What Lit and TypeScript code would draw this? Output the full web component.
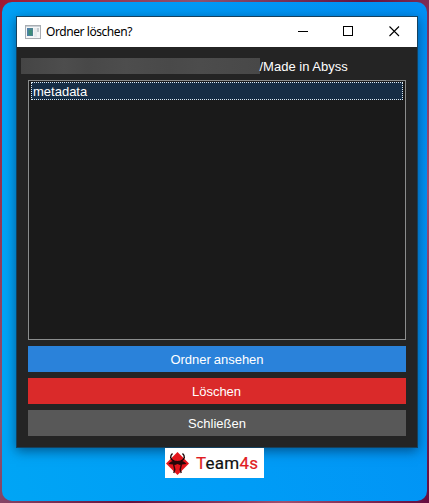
import { LitElement, html, css, svg } from "lit";
import { customElement, property } from "lit/decorators.js";

@customElement("title-bar")
export class TitleBar extends LitElement {
  static styles = css`
    :host {
      display: flex;
      align-items: center;
      height: 30px;
      background: #fff;
      color: #000;
      box-sizing: border-box;
      padding-left: 8px;
      font: 12px "Noto Sans", "Open Sans", sans-serif;
    }
    .title { flex: 1; margin-left: 5px; white-space: nowrap; letter-spacing: -0.43px; line-height: 30px; }
    .controls { display: flex; }
    .control { width: 46px; height: 30px; display: block; }
    .last { width: 45px; }
    svg { display: block; }
  `;
  render() {
    return html`
      <svg width="16" height="14" viewBox="0 0 16 14">
        <rect x=".5" y=".5" width="15" height="13" fill="#f4f5f6" stroke="#a9adb2" />
        <rect x="1" y="1" width="14" height="1" fill="#c9d0d6" />
        <rect x="2" y="3" width="6" height="8" fill="#4c8390" />
        <path d="M2 3h3v8H2z" fill="#4c7fa6" />
        <path d="M3.500 5h3.500v5h-3.500z" fill="#3f8d78" />
        <path d="M9 3h3v9H9z" fill="#e8ebed" />
        <path d="M12 3h2v4h-2z" fill="#c4cbd0" />
      </svg>
      <span class="title">Ordner löschen?</span>
      <div class="controls">
        <svg class="control" viewBox="0 0 46 30"><path d="M18 14.5h10" stroke="#000" /></svg>
        <svg class="control" viewBox="0 0 46 30"><rect x="17.5" y="9.5" width="9" height="9" fill="none" stroke="#000" /></svg>
        <svg class="control last" viewBox="0 0 45 30"><path d="M17.5 9.5l9.5 9.5M27 9.5l-9.5 9.5" stroke="#000" stroke-width="1.1" /></svg>
      </div>
    `;
  }
}

@customElement("action-button")
export class ActionButton extends LitElement {
  @property() label = "";
  @property({ reflect: true }) kind = "neutral";
  static styles = css`
    :host { display: block; height: 26px; background: #585858; }
    :host([kind="primary"]) { background: #2a82da; }
    :host([kind="danger"]) { background: #da2a2a; }
    button {
      display: block;
      width: 100%;
      height: 26px;
      padding: 1px 0 0 0;
      border: 0;
      background: none;
      color: #fff;
      font: 13px "Liberation Sans", Arial, sans-serif;
      word-spacing: -0.8px;
    }
    :host([kind="danger"]) button { padding-right: 1px; }
  `;
  render() {
    return html`<button>${this.label}</button>`;
  }
}

const emblem = svg`
  <path d="M11.500 0L23 11.500L11.500 23L0 11.500Z" fill="#e3151c" />
  <path d="M6.500 1.500C3.500 4 4 7.500 8.500 9.500M16.500 1.500C19.500 4 19 7.500 14.500 9.500" fill="none" stroke="#1a0506" stroke-width="1.5" />
  <path d="M2.500 12C5 8.500 8 8.500 11.500 9C15 8.500 18 8.500 20.500 12L16 12.500L14 13L11.500 12L9 13L7 12.500Z" fill="#260709" />
  <path d="M7.500 12L8.800 17.500L7.800 21M15.500 12L14.200 17.500L15.200 21" fill="none" stroke="#33070a" stroke-width="1.4" />
`;

@customElement("team-logo")
export class TeamLogo extends LitElement {
  static styles = css`
    :host {
      display: flex;
      align-items: center;
      width: 99px;
      height: 30px;
      box-sizing: border-box;
      padding-left: 1px;
      background: #fff;
      font: 400 17px/30px Roboto, sans-serif;
      color: #111;
      -webkit-text-stroke: 0.2px currentColor;
    }
    .name { margin-left: 7px; white-space: nowrap; letter-spacing: 0.25px; }
    .accent { color: #e01b22; }
  `;
  render() {
    return html`
      <svg width="23" height="23" viewBox="0 0 23 23">${emblem}</svg>
      <span class="name"><span class="accent">T</span>eam<span class="accent">4s</span></span>
    `;
  }
}

@customElement("app-root")
export class AppRoot extends LitElement {
  static styles = css`
    :host {
      display: block;
      width: 429px;
      height: 503px;
      box-sizing: border-box;
      padding: 2px;
      overflow: hidden;
      background: linear-gradient(115deg, #a01832 0%, #8d5270 30%, #66123f 55%, #a05070 78%, #650c3f 100%);
      font: 13px "Liberation Sans", Arial, sans-serif;
    }
    .desktop {
      height: 499px;
      width: 425px;
      box-sizing: border-box;
      padding: 14px 10px 0 14px;
      border-radius: 10px;
      background: linear-gradient(75deg, #00a5f5 0%, #009cf6 45%, #0290f5 100%);
      overflow: hidden;
      display: flex;
      flex-direction: column;
      align-items: flex-start;
    }
    .window {
      width: 402px;
      height: 432px;
      box-sizing: border-box;
      border: 1px solid #15415f;
      background: #242424;
      color: #fff;
      box-shadow: 0 3px 11px rgba(0, 25, 55, 0.55);
      flex: none;
    }
    .content { padding: 11px 11px 0; display: flex; flex-direction: column; }
    .path { display: flex; height: 16px; margin-left: -7px; line-height: 17px; white-space: nowrap; }
    .redacted {
      width: 239px;
      height: 16px;
      background: linear-gradient(90deg, #454545, #4d4d4d 18%, #484848 28%, #4d4d4d 44%, #494949 62%, #4c4c4c 75%, #484848);
    }
    .name { margin-left: -0.5px; }
    .list {
      height: 260px;
      box-sizing: border-box;
      margin-top: 6px;
      border: 1px solid #8b8d8d;
      background: #1a1a1a;
      padding: 1px 2px 0;
    }
    .item {
      height: 18px;
      box-sizing: border-box;
      border: 1px dotted #dce9f3;
      background: #162d45;
      padding-left: 1px;
      line-height: 17px;
    }
    .actions { display: grid; gap: 6px; margin-top: 6px; }
    team-logo { margin-left: 149px; flex: none; }
  `;
  render() {
    return html`
      <div class="desktop">
        <div class="window">
          <title-bar></title-bar>
          <div class="content">
            <div class="path">
              <div class="redacted"></div>
              <span class="name">/Made in Abyss</span>
            </div>
            <div class="list"><div class="item">metadata</div></div>
            <div class="actions">
              <action-button kind="primary" label="Ordner ansehen"></action-button>
              <action-button kind="danger" label="Löschen"></action-button>
              <action-button label="Schließen"></action-button>
            </div>
          </div>
        </div>
        <team-logo></team-logo>
      </div>
    `;
  }
}
